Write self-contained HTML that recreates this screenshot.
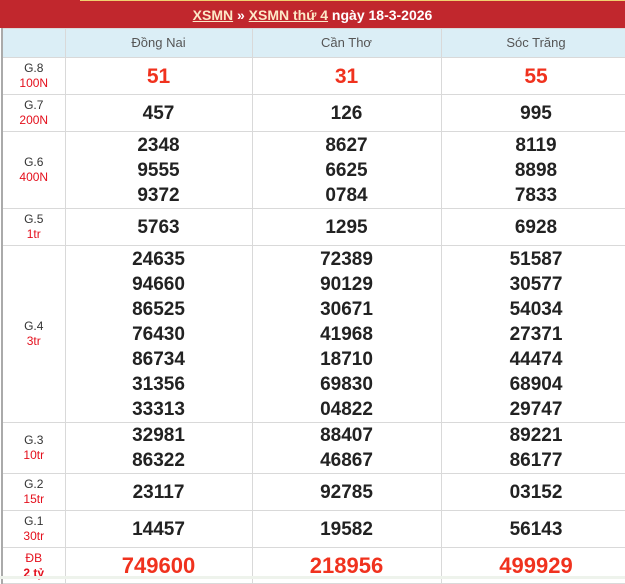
<!DOCTYPE html>
<html><head><meta charset="utf-8"><style>
*{margin:0;padding:0;box-sizing:border-box}
body{width:625px;height:579px;overflow:hidden;background:#fff;font-family:"Liberation Sans",Arial,sans-serif;position:relative}
.top{position:absolute;left:0;top:0;width:625px;height:28px;background:#c1272d}
.yl{position:absolute;left:80px;top:0;width:545px;height:1px;background:#f0d070}
.title{position:absolute;left:0;top:0;width:625px;height:28px;line-height:30px;text-align:center;color:#fff;font-weight:bold;font-size:14px}
.title a{color:#fde9c8;text-decoration:underline}
table{position:absolute;left:1px;top:28px;width:629px;border-collapse:collapse;table-layout:fixed}
td{border:1px solid #d9d9d9;text-align:center;vertical-align:middle;color:#222;font-weight:bold;font-size:19px;line-height:25px}
td:first-child{border-left:2px solid #aaa}
tr.h td{background:#dbeef6;font-weight:normal;font-size:13px;color:#555;height:29px;line-height:16px}
td.g{font-weight:normal;font-size:12px;line-height:15px;color:#333}
td.g span{color:#e4101d;display:block}
.r{color:#f0321e;font-size:21px}
.db{color:#f0321e;font-size:22px}
</style></head><body>
<div class="top"></div><div class="yl"></div>
<div class="title"><a>XSMN</a> » <a>XSMN thứ 4</a> ngày 18-3-2026</div>
<table>
<colgroup><col style="width:63px"><col style="width:187px"><col style="width:189px"><col style="width:190px"></colgroup>
<tr class="h"><td></td><td>Đồng Nai</td><td>Cần Thơ</td><td>Sóc Trăng</td></tr>
<tr style="height:37px"><td class="g">G.8<span>100N</span></td><td class="r">51</td><td class="r">31</td><td class="r">55</td></tr>
<tr style="height:37px"><td class="g">G.7<span>200N</span></td><td>457</td><td>126</td><td>995</td></tr>
<tr style="height:77px"><td class="g">G.6<span>400N</span></td><td>2348<br>9555<br>9372</td><td>8627<br>6625<br>0784</td><td>8119<br>8898<br>7833</td></tr>
<tr style="height:37px"><td class="g">G.5<span>1tr</span></td><td>5763</td><td>1295</td><td>6928</td></tr>
<tr style="height:177px"><td class="g">G.4<span>3tr</span></td><td>24635<br>94660<br>86525<br>76430<br>86734<br>31356<br>33313</td><td>72389<br>90129<br>30671<br>41968<br>18710<br>69830<br>04822</td><td>51587<br>30577<br>54034<br>27371<br>44474<br>68904<br>29747</td></tr>
<tr style="height:51px"><td class="g">G.3<span>10tr</span></td><td>32981<br>86322</td><td>88407<br>46867</td><td>89221<br>86177</td></tr>
<tr style="height:37px"><td class="g">G.2<span>15tr</span></td><td>23117</td><td>92785</td><td>03152</td></tr>
<tr style="height:37px"><td class="g">G.1<span>30tr</span></td><td>14457</td><td>19582</td><td>56143</td></tr>
<tr style="height:36px"><td class="g" style="color:#e4101d">ĐB<span style="font-weight:bold">2 tỷ</span></td><td class="db">749600</td><td class="db">218956</td><td class="db">499929</td></tr>
</table>
<div style="position:absolute;left:0;top:576px;width:625px;height:3px;background:#eef3ec"></div>
</body></html>
